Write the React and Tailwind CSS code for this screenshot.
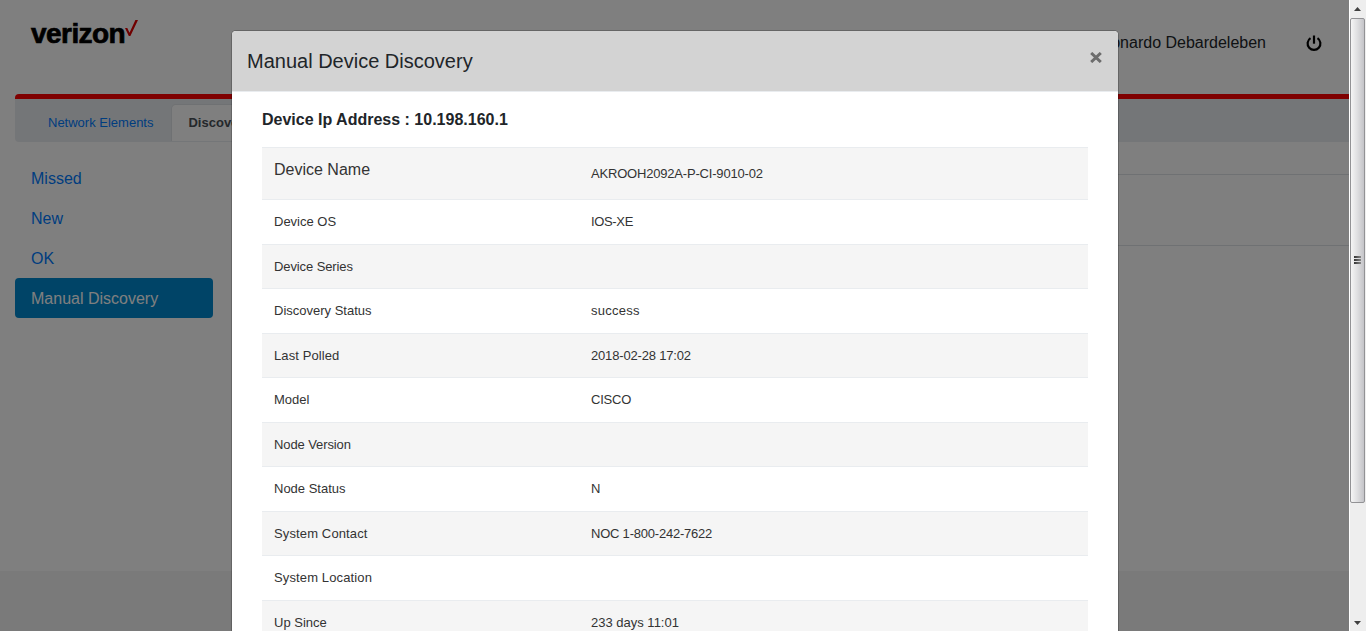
const rows = [
  ['Device OS', 'IOS-XE', '', 'tracking-[-0.35px]'],
  ['Device Series', '', 'tracking-[-0.1px]', ''],
  ['Discovery Status', 'success', '', 'tracking-[0.25px]'],
  ['Last Polled', '2018-02-28 17:02', 'tracking-[0.1px]', 'tracking-[-0.17px]'],
  ['Model', 'CISCO', '', 'tracking-[-0.2px]'],
  ['Node Version', '', 'tracking-[-0.1px]', ''],
  ['Node Status', 'N', '', ''],
  ['System Contact', 'NOC 1-800-242-7622', 'tracking-[0.13px]', 'tracking-[-0.22px]'],
  ['System Location', '', 'tracking-[0.13px]', ''],
  ['Up Since', '233 days 11:01', '', ''],
];

function Logo() {
  return (
    <div className="flex h-8 w-[110px] items-start">
      <span className="w-[95px] pl-px text-[28px] leading-[32px] font-bold tracking-[-0.55px] text-black [-webkit-text-stroke:0.7px_black]">verizon</span>
      <svg className="mt-[2px] h-[17px] w-[13px] shrink-0" viewBox="0 0 13 17">
        <path d="M0 8h2.3l2.2 4.8L10.4 0H13L5.4 16H3.8z" fill="#e00000" />
      </svg>
    </div>
  );
}

function Header() {
  return (
    <header className="flex h-[94px] items-start justify-between pt-[18px] pr-[26px] pl-[30px]">
      <Logo />
      <div className="flex items-center pt-[13px]">
        <span className="text-[16px] leading-6 whitespace-nowrap text-[#212529]">Leonardo Debardeleben</span>
        <svg className="mt-[1px] mr-[1px] ml-[40px] h-[17px] w-[16px]" viewBox="0 0 16 17" fill="none" stroke="#000" strokeWidth="2.2">
          <path d="M8 .5v8.2" />
          <path d="M4.5 3.2a6.4 6.4 0 1 0 7 0" />
        </svg>
      </div>
    </header>
  );
}

function PageContent() {
  return (
    <div className="flex h-full w-full flex-col bg-white">
      <Header />
      <div className="ml-[15px] flex h-[48px] shrink-0 items-end rounded-l-[4px] border-t-[5px] border-[#fe0000] bg-[#e9ecf0] text-[13px]">
        <div className="flex h-[37px] items-center pr-[18px] pb-[2px] pl-[33px] text-[#007bff]">Network Elements</div>
        <div className="mb-px flex h-[37px] w-[110px] items-center rounded-t-[5px] border border-b-0 border-[#dee2e6] bg-white pl-[16px] font-bold text-[#495057]">Discovery</div>
      </div>
      <div className="flex h-[429px] shrink-0">
        <nav className="flex w-[228px] flex-col pt-[16px] pr-[15px] pl-[15px] text-[16px] leading-6 text-[#007bff]">
          <a className="px-4 pt-[9px] pb-[7px]">Missed</a>
          <a className="px-4 pt-[9px] pb-[7px]">New</a>
          <a className="px-4 pt-[9px] pb-[7px]">OK</a>
          <a className="rounded-[4px] bg-[#0088ce] px-4 pt-[9px] pb-[7px] text-white">Manual Discovery</a>
        </nav>
        <div className="flex-1 pt-[32px] pl-[15px]">
          <div className="h-[72px] border-y border-[#dee2e6]" />
        </div>
      </div>
      <footer className="flex-1 bg-[#f4f4f4]" />
    </div>
  );
}

function Modal() {
  return (
    <div className="h-[700px] w-[888px] shrink-0 overflow-hidden rounded-[5px] border border-black/20 bg-white bg-clip-padding">
      <div className="flex h-[61px] items-start justify-between border-b border-[#e9ecef] bg-[#d3d3d3] pt-[15px] pr-[16px] pl-[15px]">
        <h5 className="text-[20px] leading-[30px] text-[#212529]">Manual Device Discovery</h5>
        <svg className="mt-[6px] h-[11px] w-[12px]" viewBox="0 0 12 11" stroke="#6d6d6d" strokeWidth="3">
          <path d="M1.2 1l9.6 9M10.8 1l-9.6 9" />
        </svg>
      </div>
      <div className="px-[30px] pt-[16px]">
        <div className="h-[39px] text-[16px] leading-6 font-bold text-[#212529]">Device Ip Address : 10.198.160.1</div>
        <table className="w-full border-collapse text-[13px] leading-[19.5px] text-[#333]">
          <tbody>
            <tr className="h-[52px] border-t border-[#e9ecef] bg-[#f5f5f5]">
              <td className="w-[317px] px-3 pt-[10px] align-top text-[16px] leading-6">Device Name</td>
              <td className="px-3 align-middle tracking-[-0.19px]">AKROOH2092A-P-CI-9010-02</td>
            </tr>
            {rows.map(([label, value, labelClass, valueClass]) => (
              <tr key={label} className="h-[44.5px] border-t border-[#e9ecef] odd:bg-[#f5f5f5]">
                <td className={`px-3 py-0 align-middle ${labelClass}`}>{label}</td>
                <td className={`px-3 py-0 align-middle ${valueClass}`}>{value}</td>
              </tr>
            ))}
          </tbody>
        </table>
      </div>
    </div>
  );
}

function Scrollbar() {
  return (
    <div className="flex h-full w-[17px] shrink-0 flex-col items-start border-l border-white bg-[#eeeeee]">
      <div className="flex h-[18px] w-[15px] items-center justify-center">
        <svg className="h-[4px] w-[7px]" viewBox="0 0 7 4"><path d="M3.5 0L7 4H0z" fill="#404040" /></svg>
      </div>
      <div className="flex h-[485px] w-[15px] flex-col items-center justify-center gap-[1px] rounded-[2px] border border-[#929295] bg-linear-to-r from-[#f5f5f5] via-[#dedee0] to-[#c4c4c8] pr-px pb-[2px]">
        <div className="h-[2px] w-[7px] bg-linear-to-r from-[#333] to-[#888]" />
        <div className="h-[2px] w-[7px] bg-linear-to-r from-[#333] to-[#888]" />
        <div className="h-[2px] w-[7px] bg-linear-to-r from-[#333] to-[#888]" />
      </div>
      <div className="flex w-[15px] flex-1 items-end justify-center pb-[6px]">
        <svg className="h-[4px] w-[7px]" viewBox="0 0 7 4"><path d="M0 0h7L3.5 4z" fill="#404040" /></svg>
      </div>
    </div>
  );
}

export default function App() {
  return (
    <div className="flex h-[631px] w-[1366px] overflow-hidden font-['Liberation_Sans',Arial,sans-serif]">
      <main className="relative h-full w-[1349px] overflow-hidden">
        <PageContent />
        <div className="absolute inset-0 flex items-start overflow-hidden bg-black/50 pt-[30px] pl-[231px]">
          <Modal />
        </div>
      </main>
      <Scrollbar />
    </div>
  );
}
